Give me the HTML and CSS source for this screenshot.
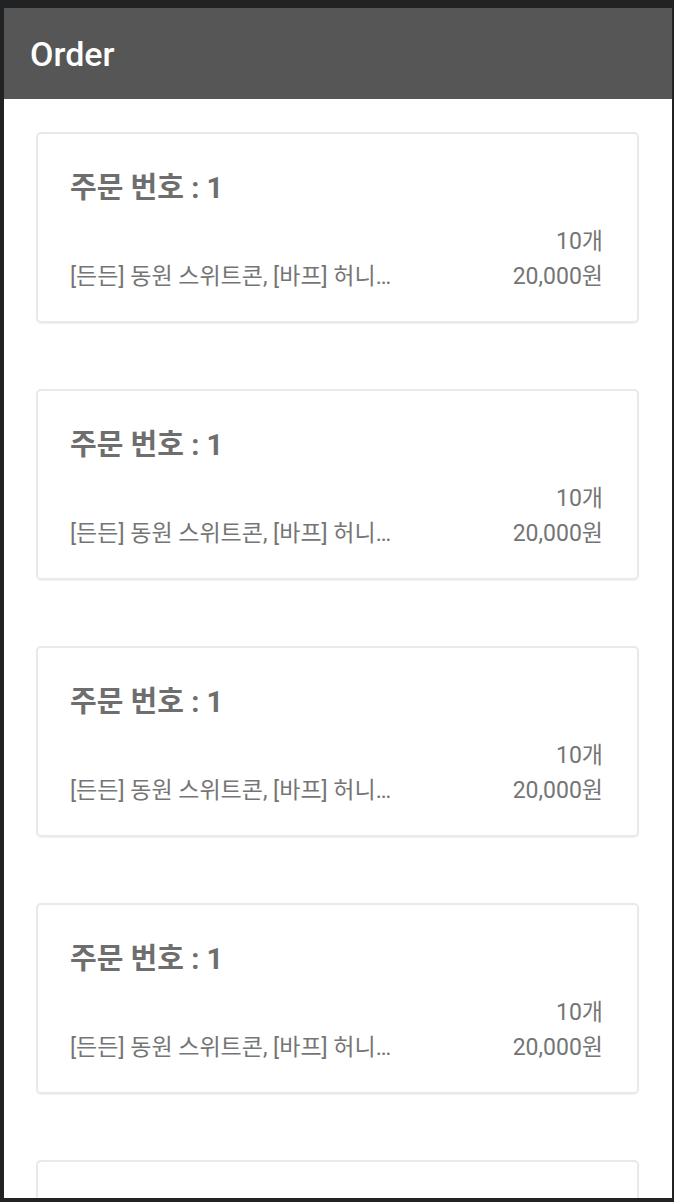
FILE: index.html
```html
<!DOCTYPE html>
<html lang="ko">
<head>
  <meta charset="UTF-8">
  <meta name="viewport" content="width=device-width, initial-scale=1.0">
  <title>Order</title>
  <link rel="stylesheet" href="styles.css">
</head>
<body>

  <div class="screen">
    <div class="appbar">
      <span class="appbar-title">Order</span>
    </div>

    <div class="order-list">
      <div class="order-card">
        <div class="order-title">주문 번호 : 1</div>
        <div class="order-row">
          <div class="order-items">[든든] 동원 스위트콘, [바프] 허니…</div>
          <div class="order-summary">
            <div>10개</div>
            <div>20,000원</div>
          </div>
        </div>
      </div>

      <div class="order-card">
        <div class="order-title">주문 번호 : 1</div>
        <div class="order-row">
          <div class="order-items">[든든] 동원 스위트콘, [바프] 허니…</div>
          <div class="order-summary">
            <div>10개</div>
            <div>20,000원</div>
          </div>
        </div>
      </div>

      <div class="order-card">
        <div class="order-title">주문 번호 : 1</div>
        <div class="order-row">
          <div class="order-items">[든든] 동원 스위트콘, [바프] 허니…</div>
          <div class="order-summary">
            <div>10개</div>
            <div>20,000원</div>
          </div>
        </div>
      </div>

      <div class="order-card">
        <div class="order-title">주문 번호 : 1</div>
        <div class="order-row">
          <div class="order-items">[든든] 동원 스위트콘, [바프] 허니…</div>
          <div class="order-summary">
            <div>10개</div>
            <div>20,000원</div>
          </div>
        </div>
      </div>

      <div class="order-card">
        <div class="order-title">주문 번호 : 1</div>
        <div class="order-row">
          <div class="order-items">[든든] 동원 스위트콘, [바프] 허니…</div>
          <div class="order-summary">
            <div>10개</div>
            <div>20,000원</div>
          </div>
        </div>
      </div>
    </div>
  </div>

</body>
</html>
```

FILE: styles.css
```css
body {
  margin: 0;
  padding: 0;
  background-color: #212224;
  font-family: Roboto, "Noto Sans CJK KR", sans-serif;
}

/* device screen inside the dark emulator frame */
.screen {
  margin: 8px 2px 4px 4px;
  height: 1190px;
  background-color: #ffffff;
  overflow: hidden;
}

.appbar {
  height: 91px;
  background-color: #565656;
  display: flex;
  align-items: center;
  padding-left: 26px;
}

.appbar-title {
  color: #ffffff;
  font-size: 34px;
  font-weight: 500;
}

.order-list {
  display: flex;
  flex-direction: column;
  gap: 66px;
  padding: 33px 33px 0 32px;
}

.order-card {
  flex-shrink: 0;
  border: 2px solid #e9e9e9;
  border-radius: 5px;
  box-shadow: 0 1px 1px rgba(0, 0, 0, 0.06);
  padding: 38px 34px 27px 32px;
}

.order-title {
  font-size: 29px;
  font-weight: bold;
  line-height: 32px;
  color: #6e6e6e;
}

.order-row {
  display: flex;
  justify-content: space-between;
  align-items: flex-end;
  margin-top: 20px;
  font-size: 23px;
  line-height: 35px;
  color: #757575;
}

.order-summary {
  text-align: right;
}
```
